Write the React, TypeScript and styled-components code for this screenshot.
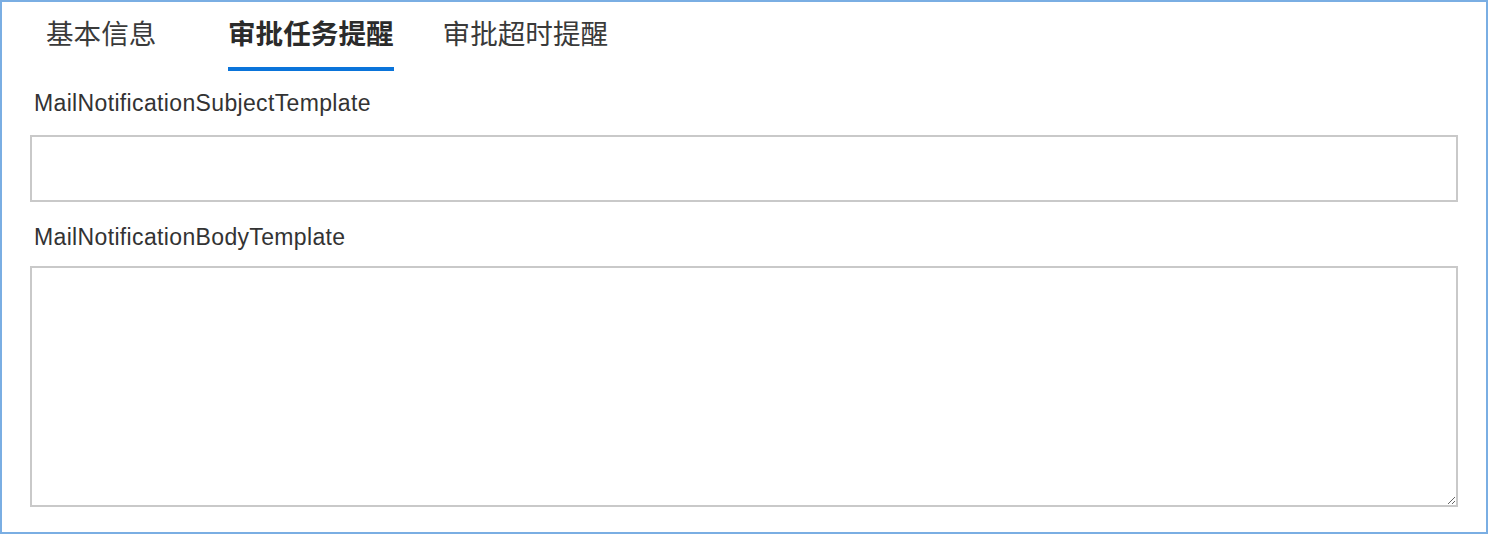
import React from "react";
import styled, { createGlobalStyle } from "styled-components";

const GlobalStyle = createGlobalStyle`
  html, body {
    margin: 0;
    padding: 0;
    background: #ffffff;
  }
  body {
    font-family: "Liberation Sans", Arial, "Noto Sans CJK SC", sans-serif;
    color: #333333;
  }
`;

const Frame = styled.div`
  box-sizing: border-box;
  width: 1488px;
  height: 534px;
  border: 2px solid #7aaee3;
  padding: 0 28px;
  background: #fff;
`;

const TabBar = styled.div`
  display: flex;
  gap: 49px;
  padding-left: 16px;
  height: 69px;
`;

const Tab = styled.div<{ $active?: boolean; $minWidth?: number }>`
  box-sizing: border-box;
  position: relative;
  height: 69px;
  padding-top: 12px;
  min-width: ${(p) => (p.$minWidth ? `${p.$minWidth}px` : "auto")};
  font-family: "Noto Sans CJK SC", "Liberation Sans", sans-serif;
  font-size: 27.6px;
  line-height: 36px;
  font-weight: ${(p) => (p.$active ? 700 : 400)};
  color: ${(p) => (p.$active ? "#2b2b2b" : "#3a3a3a")};
  white-space: nowrap;

  &::after {
    content: "";
    display: ${(p) => (p.$active ? "block" : "none")};
    position: absolute;
    left: 0;
    right: 0;
    bottom: 0;
    height: 4px;
    background: #0a74da;
  }
`;

const Field = styled.div<{ $top: number; $bottom: number }>`
  display: flex;
  flex-direction: column;

  & > label {
    margin: ${(p) => `${p.$top}px 0 ${p.$bottom}px`};
  }
`;

const Label = styled.label`
  font-size: 23px;
  line-height: 28px;
  letter-spacing: 0.35px;
  color: #333;
  padding-left: 4px;
`;

const TextInput = styled.input`
  box-sizing: border-box;
  width: 1428px;
  height: 67px;
  border: 2px solid #c9c9c9;
  outline: none;
  margin: 0;
  padding: 0 10px;
  font-size: 20px;
`;

const TextArea = styled.textarea`
  box-sizing: border-box;
  width: 1428px;
  height: 241px;
  border: 2px solid #c9c9c9;
  outline: none;
  margin: 0;
  padding: 8px 10px;
  font-size: 20px;
  resize: vertical;
  display: block;
`;

export default function App() {
  return (
    <>
      <GlobalStyle />
      <Frame>
        <TabBar>
          <Tab $minWidth={133}>基本信息</Tab>
          <Tab $active>审批任务提醒</Tab>
          <Tab>审批超时提醒</Tab>
        </TabBar>
        <Field $top={18} $bottom={18}>
          <Label>MailNotificationSubjectTemplate</Label>
          <TextInput type="text" />
        </Field>
        <Field $top={21} $bottom={15}>
          <Label>MailNotificationBodyTemplate</Label>
          <TextArea />
        </Field>
      </Frame>
    </>
  );
}
